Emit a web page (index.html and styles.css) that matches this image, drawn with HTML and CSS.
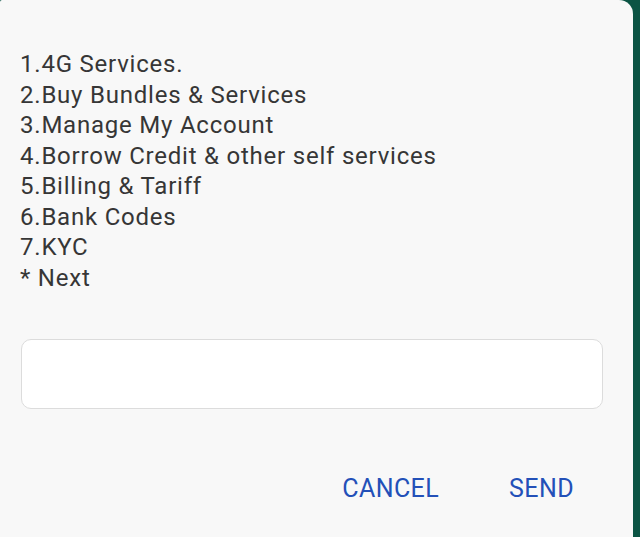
FILE: index.html
```html
<!DOCTYPE html>
<html>
<head>
<meta charset="utf-8">
<link rel="stylesheet" href="styles.css">
</head>
<body>
<div class="dialog">
  <div class="message">
    <div>1.4G Services.</div>
    <div>2.Buy Bundles &amp; Services</div>
    <div>3.Manage My Account</div>
    <div>4.Borrow Credit &amp; other self services</div>
    <div>5.Billing &amp; Tariff</div>
    <div>6.Bank Codes</div>
    <div>7.KYC</div>
    <div>* Next</div>
  </div>
  <div class="input"></div>
  <div class="actions">
    <span class="btn btn-cancel">CANCEL</span>
    <span class="btn btn-send">SEND</span>
  </div>
</div>
</body>
</html>
```
FILE: styles.css
```css
html, body {
  margin: 0;
  padding: 0;
  height: 100%;
  overflow: hidden;
}
body {
  background: #0b5444;
  font-family: Roboto, "Liberation Sans", sans-serif;
}
.dialog {
  width: 633px;
  height: 560px;
  background: #f8f8f8;
  border-radius: 2px 14px 0 0;
  box-sizing: border-box;
  padding: 49px 30px 0 20px;
}
.message {
  font-size: 24px;
  line-height: 30.5px;
  letter-spacing: 0.78px;
  color: #363636;
}
.input {
  margin-top: 46px;
  margin-left: 1px;
  height: 68px;
  background: #ffffff;
  border: 1px solid #dcdcdc;
  border-radius: 10px;
}
.actions {
  display: flex;
  justify-content: flex-end;
  gap: 70px;
  margin-top: 65px;
  padding-right: 29px;
}
.btn {
  font-size: 25px;
  line-height: 30px;
  letter-spacing: 0.4px;
  color: #2350b8;
}
```
